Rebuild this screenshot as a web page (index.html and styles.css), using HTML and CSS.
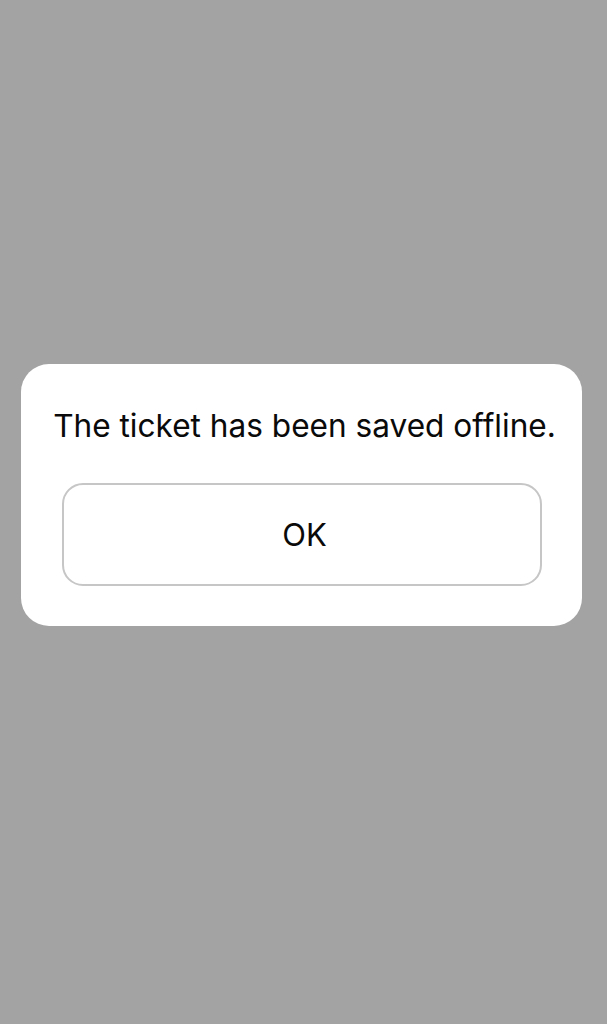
FILE: index.html
```html
<!DOCTYPE html>
<html lang="en">
<head>
  <meta charset="UTF-8" />
  <meta name="viewport" content="width=device-width, initial-scale=1.0"/>
  <title>Ticket saved</title>
  <link rel="stylesheet" href="styles.css">
</head>
<body>

<div class="overlay">
  <div class="dialog">
    <p class="message">The ticket has been saved offline.</p>
    <button class="ok-button">OK</button>
  </div>
</div>

</body>
</html>
```

FILE: styles.css
```css
* {
  box-sizing: border-box;
  font-family: Inter, "Noto Sans", sans-serif;
}
html, body {
  margin: 0;
  height: 100%;
}
body {
  background-color: #a3a3a3;
}
.overlay {
  height: 1024px;
  padding-top: 364px;
  padding-left: 21px;
}
.dialog {
  width: 561px;
  height: 262px;
  background-color: #fff;
  border-radius: 28px;
  padding: 40px 40px 0 40px;
  display: flex;
  flex-direction: column;
  align-items: center;
}
.message {
  margin: 0;
  padding-left: 6px;
  font-size: 31.6px;
  line-height: 44px;
  color: #0a0a0a;
  white-space: nowrap;
}
.ok-button {
  margin-top: 35px;
  width: 480px;
  height: 103px;
  padding: 0 0 0 6px;
  background: #fff;
  border: 2px solid #c6c6c6;
  border-radius: 21px;
  font-size: 31px;
  color: #0a0a0a;
}
```
